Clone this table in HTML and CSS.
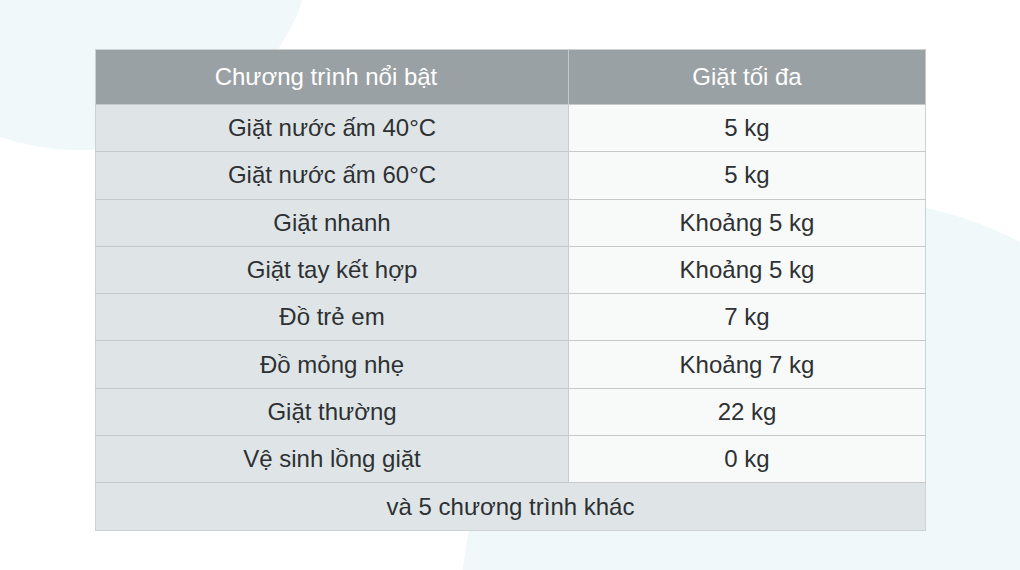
FILE: index.html
```html
<!DOCTYPE html>
<html lang="vi">
<head>
<meta charset="utf-8">
<link rel="stylesheet" href="styles.css">
</head>
<body>
<div class="page">
  <div class="blob blob-tl"></div>
  <div class="blob blob-br"></div>
  <table class="spec">
    <thead>
      <tr><th class="c1">Chương trình nổi bật</th><th class="c2">Giặt tối đa</th></tr>
    </thead>
    <tbody>
      <tr><td class="c1">Giặt nước ấm 40°C</td><td class="c2">5 kg</td></tr>
      <tr><td class="c1">Giặt nước ấm 60°C</td><td class="c2">5 kg</td></tr>
      <tr><td class="c1">Giặt nhanh</td><td class="c2">Khoảng 5 kg</td></tr>
      <tr><td class="c1">Giặt tay kết hợp</td><td class="c2">Khoảng 5 kg</td></tr>
      <tr><td class="c1">Đồ trẻ em</td><td class="c2">7 kg</td></tr>
      <tr><td class="c1">Đồ mỏng nhẹ</td><td class="c2">Khoảng 7 kg</td></tr>
      <tr><td class="c1">Giặt thường</td><td class="c2">22 kg</td></tr>
      <tr><td class="c1">Vệ sinh lồng giặt</td><td class="c2">0 kg</td></tr>
      <tr><td class="c1 wide" colspan="2">và 5 chương trình khác</td></tr>
    </tbody>
  </table>
</div>
</body>
</html>
```

FILE: styles.css
```css
html, body {
  margin: 0;
  padding: 0;
  background: #ffffff;
}
.page {
  position: relative;
  width: 1020px;
  height: 570px;
  overflow: hidden;
  background: #ffffff;
  font-family: "Liberation Sans", Arial, sans-serif;
  padding: 49px 0 0 95px;
  box-sizing: border-box;
}
.blob {
  position: absolute;
  background: #f1f8fa;
  border-radius: 50%;
  z-index: 0;
}
.blob-tl {
  left: -152px;
  top: -270px;
  width: 464px;
  height: 420px;
}
.blob-br {
  left: 460px;
  top: 200px;
  width: 780px;
  height: 840px;
}
.spec {
  position: relative;
  z-index: 1;
  border-collapse: collapse;
  width: 831px;
  table-layout: fixed;
  border: 1px solid #cdd2d4;
}
.spec th, .spec td {
  text-align: center;
  vertical-align: middle;
  font-weight: normal;
  padding: 0;
}
.spec th {
  height: 54px;
  background: #9aa1a4;
  color: #ffffff;
  font-size: 24px;
  border-right: 1px solid #c3c8ca;
}
.spec th.c1 { width: 473px; padding-right: 12px; box-sizing: border-box; }
.spec td {
  height: 46.3px;
  font-size: 24px;
  color: #2e3133;
  border-top: 1px solid #c4c9cb;
}
.spec td.c1 {
  background: #dfe5e7;
  border-right: 1px solid #c8cdcf;
}
.spec td.c2 {
  background: #f8f9f9;
}
.spec td.wide {
  height: 47px;
  border-right: none;
}
```
